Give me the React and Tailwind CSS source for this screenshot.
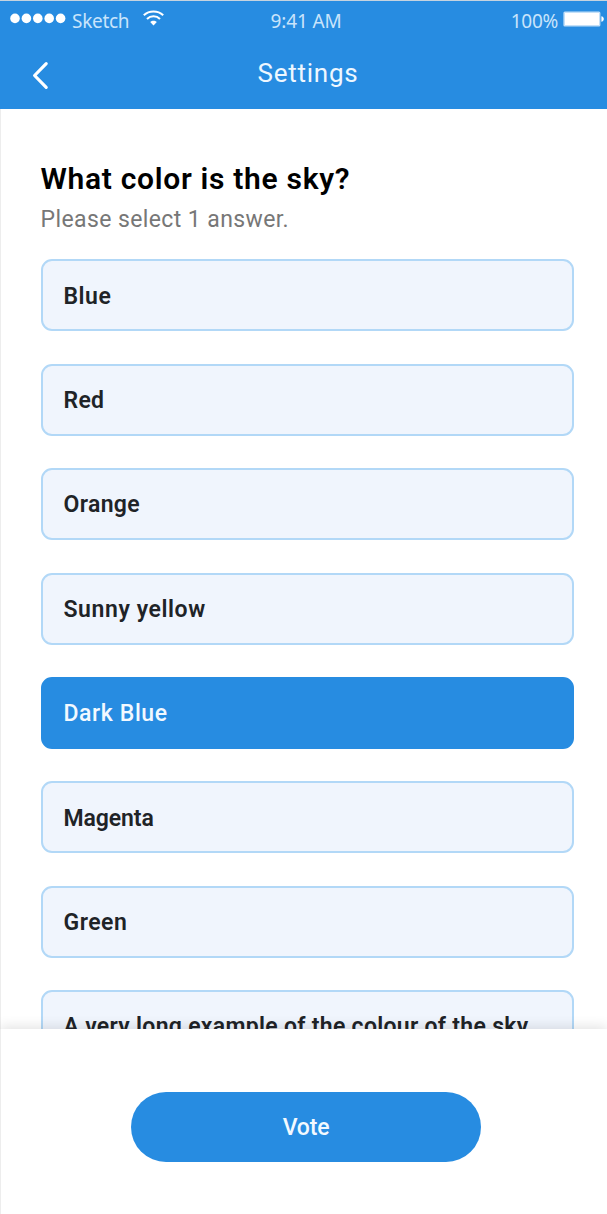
const options = [
  { label: 'Blue', tracking: 'tracking-[0.5px]' },
  { label: 'Red', tracking: 'tracking-[0.3px]' },
  { label: 'Orange', tracking: 'tracking-[0.35px]' },
  { label: 'Sunny yellow', tracking: 'tracking-[0.58px]' },
  { label: 'Dark Blue', tracking: 'tracking-[0.6px]', selected: true },
  { label: 'Magenta', tracking: 'tracking-[-0.1px]' },
  { label: 'Green', tracking: 'tracking-[0.5px]' },
  { label: 'A very long example of the colour of the sky', tracking: 'tracking-[0.3px]' },
];

function StatusBar() {
  return (
    <div className="grid h-[35px] grid-cols-3 font-['Noto_Sans',sans-serif] text-[19px] leading-[41px] text-[#c9e4fb]">
      <div className="flex pl-[10px]">
        <svg className="mt-[12px] h-[11px] w-[56px] shrink-0" viewBox="0 0 56 11" fill="#fff">
          <circle cx="5" cy="5.4" r="4.8" />
          <circle cx="16.4" cy="5.4" r="4.8" />
          <circle cx="27.8" cy="5.4" r="4.8" />
          <circle cx="39.2" cy="5.4" r="4.8" />
          <circle cx="50.6" cy="5.4" r="4.8" />
        </svg>
        <span className="ml-[6px] w-[71px] shrink-0 tracking-[-0.3px]">Sketch</span>
        <svg className="mt-[9px] h-[16px] w-[21px] shrink-0" viewBox="0 0 21 16" fill="none" stroke="#fff" strokeWidth="2.1">
          <path d="M.8 5.3C6.2.3 14.8.3 20.2 5.3" />
          <path d="M4 8.9c3.6-3.5 9.4-3.5 13 0" />
          <path d="M10.5 15.5 7.2 12c1.8-1.8 4.8-1.8 6.6 0z" fill="#fff" stroke="none" />
        </svg>
      </div>
      <span className="pl-[5px] text-center tracking-[-0.15px]">9:41 AM</span>
      <div className="flex justify-end pr-[3px]">
        <span className="tracking-[-0.3px]">100%</span>
        <svg className="mt-[10px] ml-[5px] h-[16px] w-[41px] shrink-0" viewBox="0 0 41 16" fill="#fff">
          <rect x=".4" y=".4" width="37" height="15" rx="1.5" fill="#c4e0f8" />
          <rect x="2" y="2" width="34" height="12" />
          <path d="M38.4 5.2c1.5.3 2.4 1.3 2.4 2.8s-.9 2.5-2.4 2.8z" />
        </svg>
      </div>
    </div>
  );
}

function Header() {
  return (
    <header className="h-[109px] shrink-0 border-t border-[#c5d3df] bg-[#278ce1]">
      <StatusBar />
      <div className="grid h-[73px] grid-cols-[1fr_auto_1fr]">
        <button className="flex pt-[25px] pl-[31px]" aria-label="Back">
          <svg className="h-[29px] w-[18px]" viewBox="0 0 18 29" fill="none" stroke="#fff" strokeWidth="3.2" strokeLinecap="round" strokeLinejoin="round">
            <path d="M15.2 2.7 3.6 14.5 15.2 26.4" />
          </svg>
        </button>
        <h1 className="pt-[15px] pl-[9px] text-[26px] leading-[44px] tracking-[0.75px] text-[#eef7ff]">Settings</h1>
      </div>
    </header>
  );
}

function Option({ label, tracking, selected }) {
  return (
    <button
      className={`flex h-[72px] w-full shrink-0 items-center rounded-[11px] border-2 pt-[3px] pl-[21px] text-[23px] whitespace-nowrap ${tracking} ${
        selected
          ? 'border-[#278ce1] bg-[#278ce1] font-medium text-[#f2f9ff]'
          : 'border-[#b2d8f7] bg-[#f0f5fd] font-semibold text-[#202327]'
      }`}
    >
      {label}
    </button>
  );
}

export default function App() {
  return (
    <div className="flex h-[1214px] w-[607px] flex-col overflow-hidden bg-white font-['Roboto',sans-serif]">
      <Header />
      <main className="h-[920px] shrink-0 overflow-hidden border-l border-[#ededed] pt-[50px] pr-[33px] pl-[39.5px]">
        <h2 className="h-[40px] text-[30px] leading-[40px] font-semibold tracking-[0.7px] whitespace-nowrap text-black">What color is the sky?</h2>
        <p className="h-[60.4px] text-[23px] leading-[42px] tracking-[0.4px] whitespace-nowrap text-[#777]">Please select 1 answer.</p>
        <div className="flex flex-col gap-[32.4px]">
          {options.map((option) => (
            <Option key={option.label} {...option} />
          ))}
        </div>
      </main>
      <footer className="relative flex grow justify-center border-l border-[#ededed] bg-white pt-[63px] pl-[4px] shadow-[0_-2px_12px_rgba(0,0,0,0.12)]">
        <button className="h-[70px] w-[350px] rounded-full bg-[#278ce1] pt-[2px] text-[23px] font-medium tracking-[-0.2px] text-[#f2f9ff]">Vote</button>
      </footer>
    </div>
  );
}
